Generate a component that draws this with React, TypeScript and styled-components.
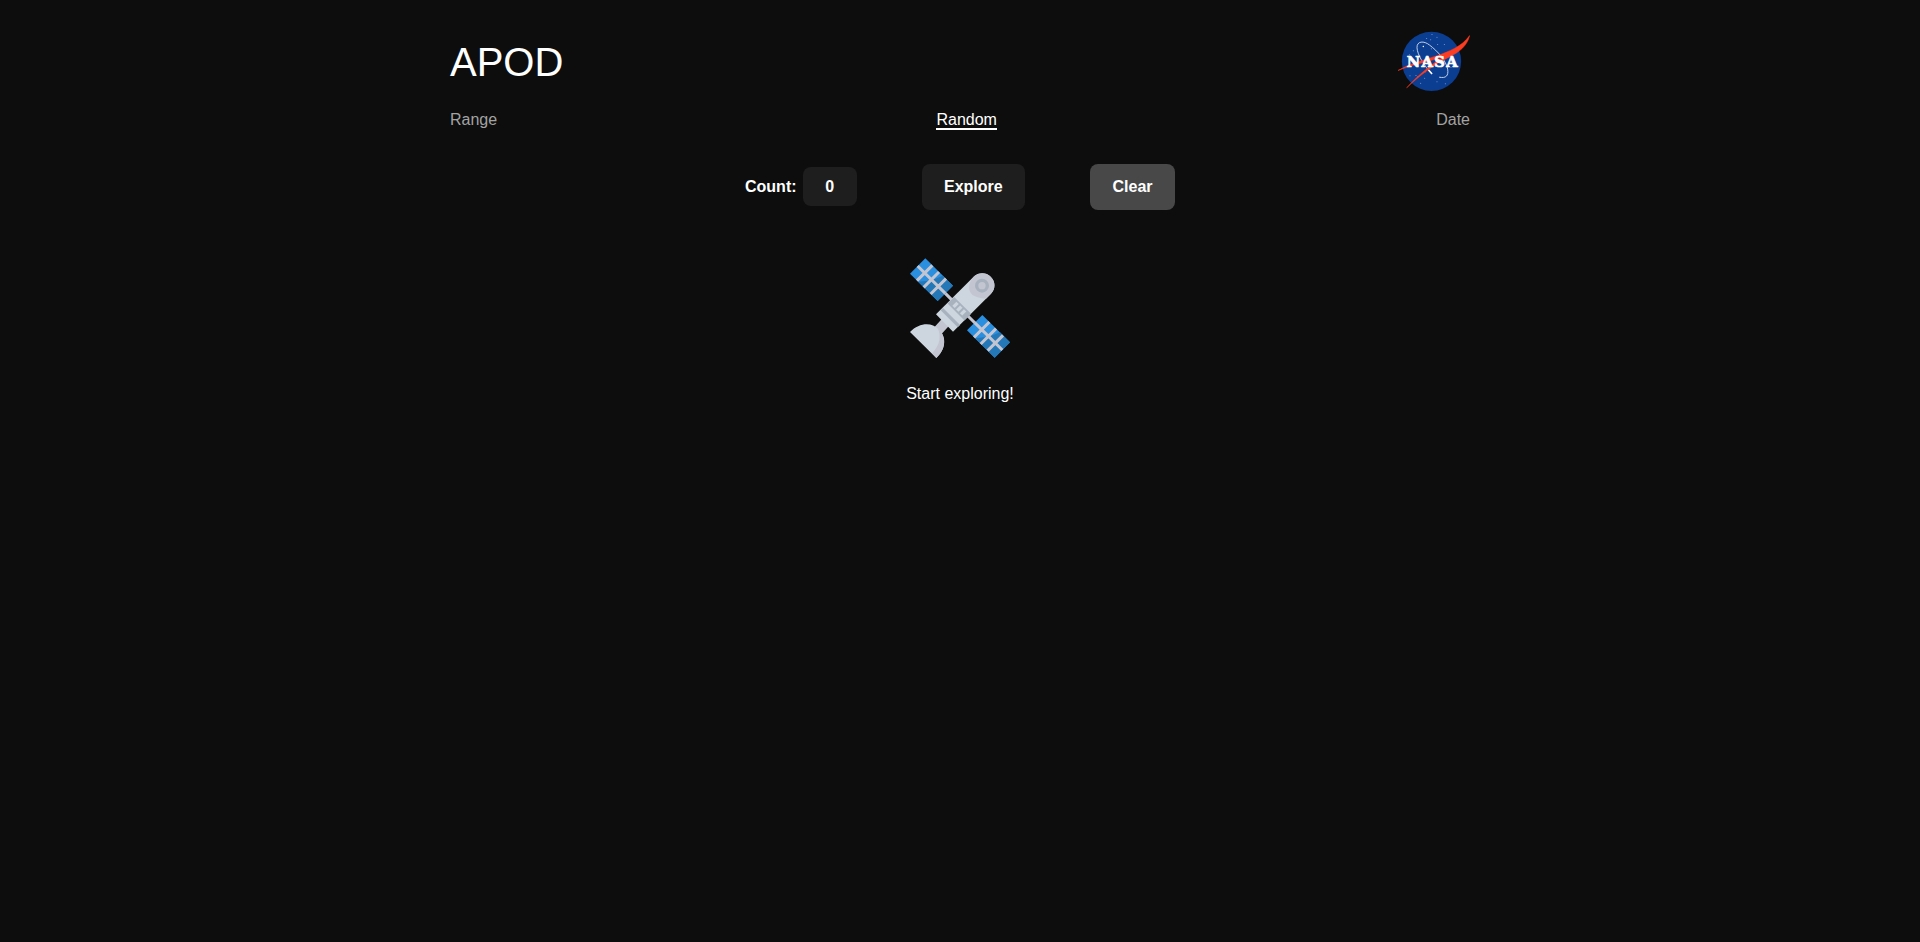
import React, { useState } from "react";
import styled, { createGlobalStyle } from "styled-components";

const GlobalStyle = createGlobalStyle`
  *, *::before, *::after { box-sizing: border-box; }
  body {
    margin: 0;
    min-height: 100vh;
    background: #0d0d0d;
    color: #fff;
    font: 16px/18px "Liberation Sans", Arial, sans-serif;
  }
`;

const Page = styled.div`
  width: 1020px;
  margin: 0 auto;
`;

const Header = styled.header`
  display: flex;
  justify-content: space-between;
  align-items: flex-start;
  padding-top: 31px;
  height: 110px;
`;

const Title = styled.h1`
  margin: 8px 0 0;
  font-size: 40px;
  line-height: 46px;
  font-weight: 400;
`;

const Nav = styled.nav`
  display: flex;
  justify-content: space-between;
  align-items: flex-start;
  height: 54px;
`;

const NavLink = styled.a<{ $active?: boolean }>`
  height: 20px;
  line-height: 20px;
  color: ${(p) => (p.$active ? "#fff" : "#a3a3a3")};
  border-bottom: 2px solid ${(p) => (p.$active ? "#fff" : "transparent")};
  text-decoration: none;
  cursor: pointer;
`;

const Form = styled.form`
  display: flex;
  justify-content: center;
  align-items: center;
  gap: 65px;
  height: 46px;
  padding-right: 0.1px;
  font-weight: 700;
`;

const CountLabel = styled.label`
  display: flex;
  align-items: center;
  gap: 6.1px;
`;

const CountInput = styled.input`
  width: 54px;
  height: 39px;
  margin: 0 0 1px;
  padding: 1px 0 0;
  border: 0;
  border-radius: 8px;
  background: #1e1e1e;
  color: #fff;
  font: inherit;
  text-align: center;
`;

const Button = styled.button<{ $muted?: boolean }>`
  height: 46px;
  padding: 0 22.4px;
  border: 0;
  border-radius: 8px;
  background: ${(p) => (p.$muted ? "#484848" : "#1e1e1e")};
  color: #fff;
  font: inherit;
  cursor: pointer;
`;

const Empty = styled.main`
  display: flex;
  flex-direction: column;
  align-items: center;
  gap: 27px;
  padding-top: 48px;
`;

const Prompt = styled.p`
  margin: 0;
`;

const stars: [number, number][] = [
  [110, 44], [122, 48], [126, 32], [141, 40], [143, 62], [100, 67], [124, 75],
  [163, 62], [70, 81], [58, 93], [60, 156], [78, 155], [84, 158], [92, 178],
  [104, 163], [106, 144], [150, 161], [141, 174], [166, 180], [183, 130],
];

const NasaLogo = () => (
  <svg width="72" height="60" viewBox="24 21.5 216 180" aria-label="NASA">
    <circle cx="124.5" cy="112.5" r="89" fill="#0b3d91" />
    {stars.map(([x, y]) => (
      <circle key={`${x}-${y}`} cx={x} cy={y} r="1.6" fill="#86a3d1" />
    ))}
    <circle cx="100" cy="68" r="2" fill="#fff" />
    <path
      d="M124 149C103 126 82 93 81 72C80 51 102 50 119 64C143 82 168 110 173 136C176 156 168 164 148 160"
      fill="none" stroke="#dce5f3" strokeWidth="2.6"
    />
    <path
      d="M24 140C54 122 102 109 140 96C177 83 216 68 239 35C231 68 206 85 181 98C131 122 88 156 50 192C87 151 128 119 160 99C119 113 64 123 24 140Z"
      fill="#fc3d21" stroke="#fc3d21" strokeWidth="1.5"
    />
    <path d="M117 140L125 149" stroke="#fff" strokeWidth="5" strokeLinecap="round" />
    <text
      x="50" y="130" textLength="153" lengthAdjust="spacing"
      fill="#fff" stroke="#fff" strokeWidth="2"
      fontFamily="'DejaVu Serif', serif" fontWeight="700" fontSize="44"
    >
      NASA
    </text>
  </svg>
);

const SolarPanel = ({ x, y }: { x: number; y: number }) => (
  <g transform={`translate(${x} ${y})`}>
    <path d="M0 46L46 0L129 82L83 128Z" fill="#2b8fe0" />
    <path d="M24 70C45 68 55 67 66 64C83 60 91 54 99 52L129 82L83 128Z" fill="#2478b8" />
    <path
      d="M23 23L106 105M21 67L67 21M41 87L87 41M62 107L108 61"
      fill="none" stroke="#c3c6d1" strokeWidth="9"
    />
  </g>
);

const Satellite = () => (
  <svg width="100" height="100" viewBox="30 24 300 300" aria-hidden="true">
    <path d="M130 124L160 154M198 192L228 222" stroke="#c3c6d1" strokeWidth="9" />
    <SolarPanel x={30} y={25} />
    <SolarPanel x={201} y={195} />
    <path d="M126 206L147 227L122 255L101 234Z" fill="#c3c6d1" />
    <path d="M30 246C57 218 95 216 115 237C141 259 138 298 109 324Z" fill="#cdd6de" />
    <path d="M113 234C141 259 138 298 109 324L96 310C120 286 124 258 113 234Z" fill="#c3c6d1" />
    <path d="M108 193L221 80C235 67 258 66 272 80C287 95 287 116 273 131L159 245Z" fill="#cdd6de" />
    <path d="M272 80C287 95 287 116 273 131L258 146C240 144 222 141 214 131C202 116 208 94 221 80C235 67 258 66 272 80Z" fill="#c3c6d1" />
    <g transform="translate(178 176) rotate(-45)">
      <rect x="-14" y="-36" width="28" height="72" fill="#a8b2bf" />
      <rect x="-8.5" y="-21" width="17" height="10" fill="#cdd6de" />
      <rect x="-8.5" y="-5" width="17" height="10" fill="#cdd6de" />
      <rect x="-8.5" y="11" width="17" height="10" fill="#cdd6de" />
      <rect x="-43" y="-36" width="10" height="72" fill="#a8b2bf" />
    </g>
    <circle cx="246" cy="107" r="16" fill="#c3c6d1" stroke="#a8b2bf" strokeWidth="10" />
  </svg>
);

export default function App() {
  const [count, setCount] = useState("0");
  return (
    <>
      <GlobalStyle />
      <Page>
        <Header>
          <Title>APOD</Title>
          <NasaLogo />
        </Header>
        <Nav>
          <NavLink>Range</NavLink>
          <NavLink $active>Random</NavLink>
          <NavLink>Date</NavLink>
        </Nav>
        <Form onSubmit={(e) => e.preventDefault()}>
          <CountLabel>
            Count:
            <CountInput value={count} onChange={(e) => setCount(e.target.value)} />
          </CountLabel>
          <Button type="submit">Explore</Button>
          <Button type="button" $muted onClick={() => setCount("0")}>Clear</Button>
        </Form>
        <Empty>
          <Satellite />
          <Prompt>Start exploring!</Prompt>
        </Empty>
      </Page>
    </>
  );
}
